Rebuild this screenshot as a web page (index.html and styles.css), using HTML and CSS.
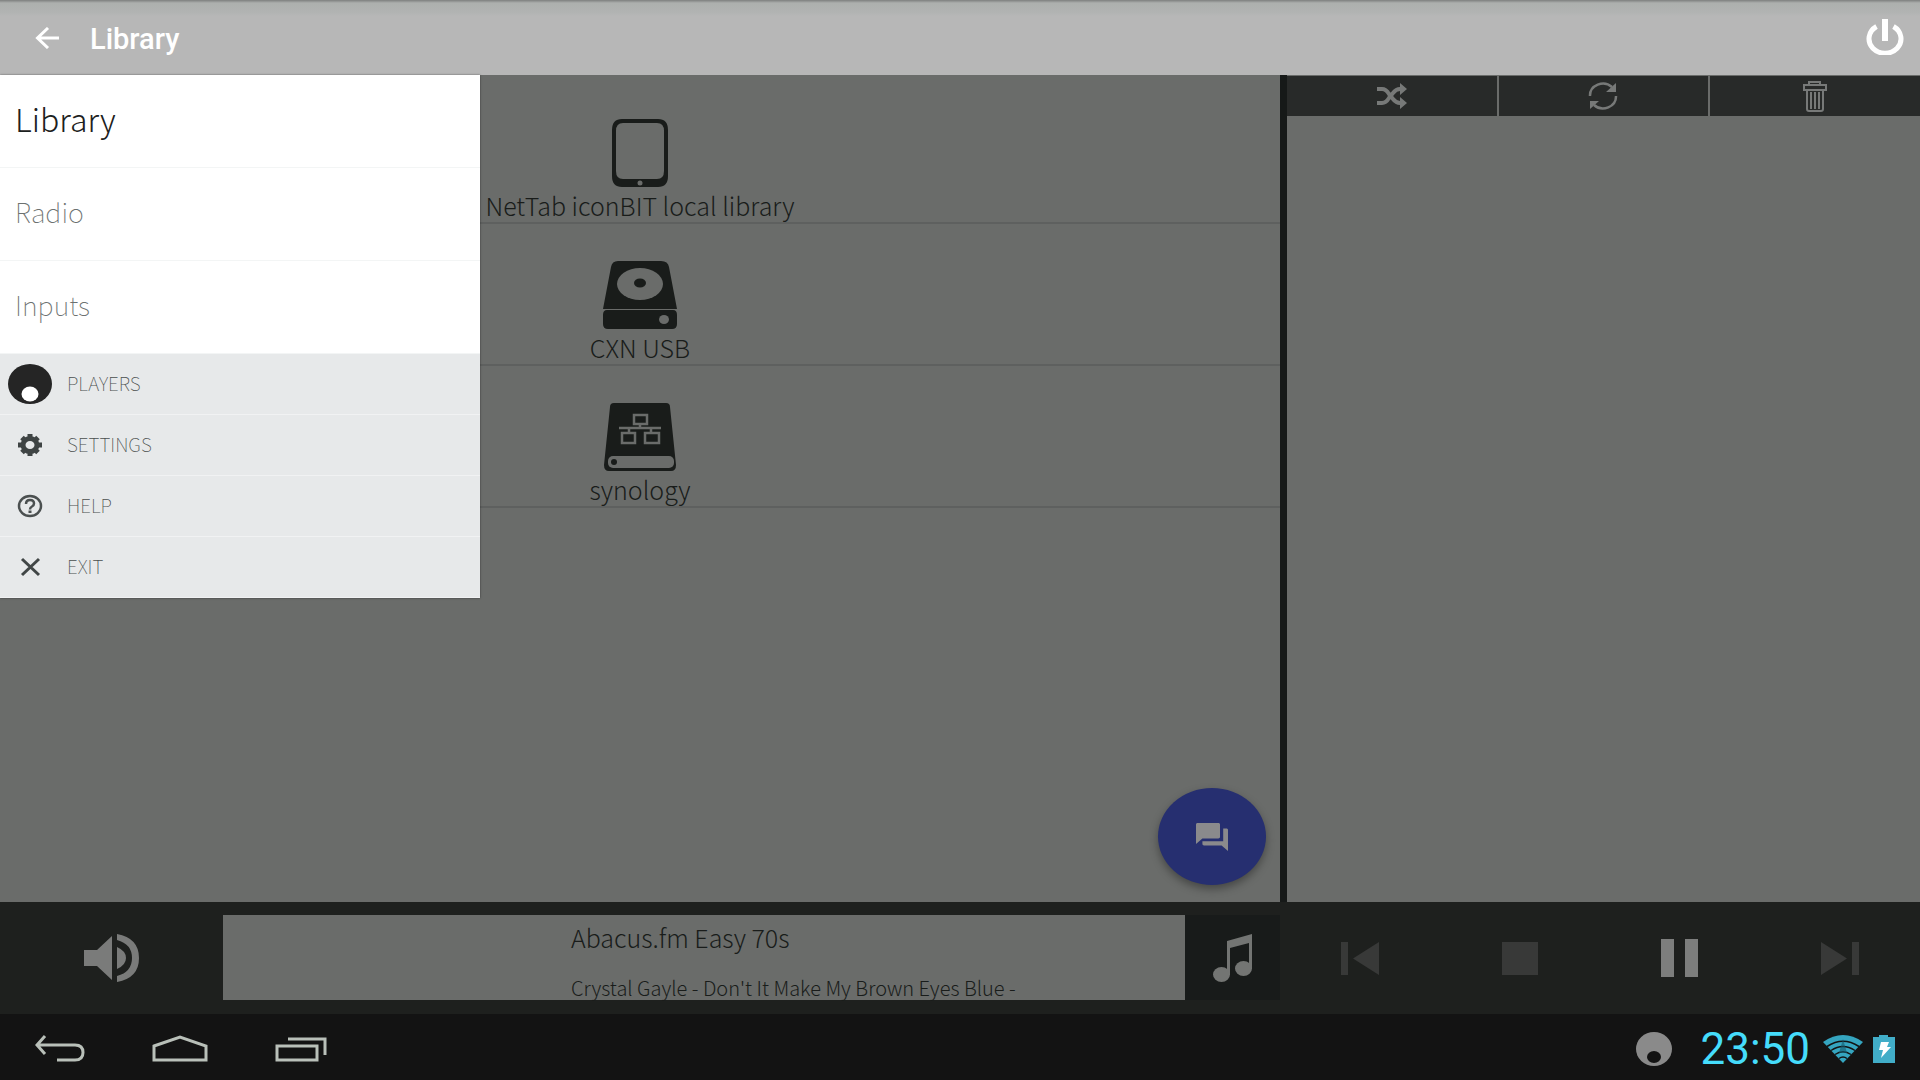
FILE: index.html
```html
<!DOCTYPE html>
<html lang="en">
<head>
<meta charset="utf-8">
<title>Library</title>
<link rel="stylesheet" href="styles.css">
</head>
<body>
<div class="app">
  <header class="topbar">
    <button class="icon-button back" aria-label="Back">
      <svg width="24" height="22" viewBox="0 0 24 22"><path d="M13 1 2.500 11 13 21M2.500 11H24" fill="none" stroke="currentColor" stroke-width="3"/></svg>
    </button>
    <h1 class="title">Library</h1>
    <button class="icon-button power" aria-label="Power">
      <svg width="38" height="36" viewBox="0 0 38 36"><path d="M10.500 7.500A16 14.500 0 1 0 27.500 7.500" fill="none" stroke="currentColor" stroke-width="5"/><path d="M16 0h6v22h-6z" fill="currentColor"/></svg>
    </button>
  </header>

  <main class="content">
    <section class="browser">
      <ul class="sources">
        <li><a class="source" href="#local">
          <svg width="76" height="70" viewBox="0 0 76 70"><path fill-rule="evenodd" fill="currentColor" d="M20 1h36q10 0 10 11v46q0 11-10 11H20q-10 0-10-11V12Q10 1 20 1zm1 4q-7 0-7 8v40q0 8 7 8h34q7 0 7-8V13q0-8-7-8z"/><circle cx="38" cy="65" r="2.500" fill="#6a6c6a"/></svg>
          <span>NetTab iconBIT local library</span></a></li>
        <li><a class="source" href="#usb">
          <svg width="76" height="70" viewBox="0 0 76 70"><path fill="currentColor" d="M16 1h43q7 0 8 6l8 42H1L9 7q1-6 7-6zM5 50h66q4 0 4 5v9q0 5-5 5H6q-5 0-5-5v-9q0-5 4-5z"/><ellipse cx="38" cy="24" rx="23" ry="16" fill="#6a6c6a"/><ellipse cx="38" cy="23" rx="6" ry="4.500" fill="currentColor"/><ellipse cx="62" cy="59.500" rx="5" ry="4.500" fill="#6a6c6a"/></svg>
          <span>CXN USB</span></a></li>
        <li><a class="source" href="#synology">
          <svg width="76" height="70" viewBox="0 0 76 70"><path fill="currentColor" d="M12 1h52q4 0 4 4l6 58q0 6-5 6H7q-5 0-5-6L8 5q0-4 4-4z"/><rect x="6" y="54" width="66" height="12" rx="5" fill="#6a6c6a"/><circle cx="12" cy="60" r="3" fill="currentColor"/><path fill="none" stroke="#6a6c6a" stroke-width="2.500" d="M32 13h13v9H32zM17 26h42M38 22v4M27 26v4M49 26v4M20 31h13v10H20zM43 31h14v10H43z"/></svg>
          <span>synology</span></a></li>
      </ul>
      <button class="fab" aria-label="Messages">
        <svg width="32" height="28" viewBox="2 2 20 20" preserveAspectRatio="none"><path fill="currentColor" d="M21 6h-2v9H6v2c0 .550.450 1 1 1h11l4 4V7c0-.550-.450-1-1-1zm-4 6V3c0-.550-.450-1-1-1H3c-.550 0-1 .450-1 1v14l4-4h10c.550 0 1-.450 1-1z"/></svg>
      </button>
    </section>

    <section class="queue">
      <div class="queue-tools">
        <button aria-label="Shuffle"><svg width="30" height="26" viewBox="0 0 30 26"><path d="M0 6h5q4 0 7 5l4 5q3 4 7 4h1M0 20h5q4 0 7-5l4-5q3-4 7-4h1" fill="none" stroke="currentColor" stroke-width="4"/><path fill="currentColor" d="M23 0l7 6-7 6zM23 14l7 6-7 6z"/></svg></button>
        <button aria-label="Repeat"><svg width="30" height="28" viewBox="0 0 30 28"><path d="M2 14A13 12 0 0 1 24 5M28 14A13 12 0 0 1 6 23" fill="none" stroke="currentColor" stroke-width="2.500"/><path fill="currentColor" d="M28 1v9h-10zM2 27v-8h9z"/></svg></button>
        <button aria-label="Clear queue"><svg width="26" height="32" viewBox="0 0 26 32"><path d="M7 5V2h11v3M2 5h22v5H2zM5 11v18q0 2 2 2h12q2 0 2-2V11M9 12v17M13 12v17M17 12v17" fill="none" stroke="currentColor" stroke-width="2"/></svg></button>
      </div>
    </section>

    <nav class="drawer">
      <a class="place current" href="#library">Library</a>
      <a class="place" href="#radio">Radio</a>
      <a class="place" href="#inputs">Inputs</a>
      <a class="action" href="#players">
        <svg width="44" height="40" viewBox="0 0 44 40"><ellipse cx="22" cy="20" rx="22" ry="20" fill="#252525"/><ellipse cx="22" cy="30" rx="8.500" ry="7.500" fill="#fff"/></svg><span>PLAYERS</span></a>
      <a class="action" href="#settings">
        <svg width="44" height="24" viewBox="0 0 44 24"><g fill="none" stroke="#3f4444"><ellipse cx="22" cy="12" rx="7" ry="6.500" stroke-width="5"/><path stroke-width="5" d="M22 1v4M22 19v4M10 12h4M30 12h4M14 4.500l3 3M27 16.500l3 3M14 19.500l3-3M27 7.500l3-3"/></g></svg><span>SETTINGS</span></a>
      <a class="action" href="#help">
        <svg width="44" height="24" viewBox="0 0 44 24"><g fill="none" stroke="#4b5050" stroke-width="2.500"><ellipse cx="22" cy="12" rx="11" ry="10"/><path d="M18 10q0-4 4-4t4 3.500q0 2-2 3t-2 3"/></g><path fill="#4b5050" d="M20.500 16.500h3v2.500h-3z"/></svg><span>HELP</span></a>
      <a class="action" href="#exit">
        <svg width="44" height="24" viewBox="0 0 44 24"><path d="M14 4l17 16M31 4L14 20" fill="none" stroke="#414646" stroke-width="3"/></svg><span>EXIT</span></a>
    </nav>
  </main>

  <footer class="player">
    <div class="now">
      <button class="volume" aria-label="Volume"><svg width="56" height="48" viewBox="0 0 56 48"><path fill="currentColor" d="M0 16h13L28 2v44L13 32H0zM33 13q9 4 9 11t-9 11zM33 0q22 4 22 24T33 48v-6q15-4 15-18T33 6z"/></svg></button>
      <div class="track">
        <p class="station">Abacus.fm Easy 70s</p>
        <p class="song">Crystal Gayle - Don't It Make My Brown Eyes Blue -</p>
      </div>
      <button class="cover" aria-label="Cover"><svg width="40" height="48" viewBox="0 0 40 48"><path fill="currentColor" d="M14 7L39 0v35h-3V9L17 14v27h-3z"/><ellipse cx="8.500" cy="40.500" rx="8.500" ry="7.500" fill="currentColor"/><ellipse cx="30.500" cy="34.500" rx="8.500" ry="7.500" fill="currentColor"/></svg></button>
    </div>
    <div class="controls">
      <button disabled aria-label="Previous"><svg width="38" height="33" viewBox="0 0 38 33"><path fill="currentColor" d="M0 0h7v33H0zM38 0v33L12 16.500z"/></svg></button>
      <button disabled aria-label="Stop"><svg width="36" height="33" viewBox="0 0 36 33"><path fill="currentColor" d="M0 0h36v33H0z"/></svg></button>
      <button aria-label="Pause"><svg width="38" height="38" viewBox="0 0 38 38"><path fill="currentColor" d="M0 0h13v38H0zM24 0h13v38H24z"/></svg></button>
      <button disabled aria-label="Next"><svg width="38" height="33" viewBox="0 0 38 33"><path fill="currentColor" d="M31 0h7v33h-7zM0 0v33l26-16.500z"/></svg></button>
    </div>
  </footer>

  <div class="system">
    <div class="system-keys">
      <button aria-label="System back"><svg width="50" height="28" viewBox="0 0 50 28"><path d="M10 1L2 10l8 9M2 10h38q8 0 8 7.500t-8 7.500H22" fill="none" stroke="currentColor" stroke-width="3"/></svg></button>
      <button aria-label="Home"><svg width="56" height="28" viewBox="0 0 56 28"><path d="M2 11L28 2l26 9v14H2z" fill="none" stroke="currentColor" stroke-width="3"/></svg></button>
      <button aria-label="Recent apps"><svg width="54" height="28" viewBox="0 0 54 28"><path d="M2 11h40v14H2zM13 4h37v16" fill="none" stroke="currentColor" stroke-width="3"/></svg></button>
    </div>
    <div class="status">
      <svg width="36" height="34" viewBox="0 0 36 34"><ellipse cx="18" cy="17" rx="18" ry="17" fill="#8a8a8a"/><ellipse cx="18" cy="25" rx="7" ry="6" fill="#131313"/></svg>
      <time class="clock">23:50</time>
      <svg width="40" height="28" viewBox="0 0 40 28"><path fill="#35a5c0" d="M0 7Q20-7 40 7L20 28z"/><path d="M4 11.500Q20 1 36 11.500M8 15.500Q20 7.500 32 15.500M12 19.500Q20 14 28 19.500M16 23.500Q20 20.500 24 23.500" fill="none" stroke="#131313" stroke-width="1.500"/><path fill="#14586a" d="M20 4l4 14h-8z" opacity=".6"/></svg>
      <svg width="22" height="28" viewBox="0 0 22 28"><path fill="#41adc8" d="M6 0h9v2h7v26H0V2h6z"/><path fill="#fff" d="M8 7h8l-2 5h4L8 23l2-8H6z"/></svg>
    </div>
  </div>
</div>
</body>
</html>
```
FILE: styles.css
```css
* { box-sizing: border-box; }

body {
  margin: 0;
  background: #131313;
  color: #191c1a;
  font-family: "Noto Sans CJK SC", "Noto Sans", sans-serif;
}

button {
  margin: 0;
  padding: 0;
  border: 0;
  background: none;
  color: inherit;
  font: inherit;
  display: flex;
  align-items: center;
  justify-content: center;
}

a { color: inherit; text-decoration: none; }
svg { display: block; flex: none; }

.app {
  min-height: 100vh;
  display: flex;
  flex-direction: column;
}

.topbar {
  height: 75px;
  flex: none;
  display: flex;
  align-items: center;
  padding: 0 16px 0 35px;
  background: linear-gradient(#7d7f7e 0, #adb0ae 3px, #b1b3b2 12px, #b7b7b7 16px);
  color: #fff;
}

.title {
  flex: 1;
  margin: 0 0 0 31px;
  padding-top: 2px;
  font: 500 29px/34px Roboto, sans-serif;
}

.power { padding-bottom: 2px; }

.content {
  position: relative;
  flex: 1;
  display: grid;
  grid-template-columns: 2fr 1fr;
  background: #6a6c6a;
}

.browser { position: relative; }

.sources { margin: 0; padding: 7px 0 0; list-style: none; }

.source {
  height: 142px;
  display: flex;
  flex-direction: column;
  align-items: center;
  justify-content: flex-end;
  border-bottom: 2px solid #5e605f;
  font-size: 25px;
  font-weight: 300;
  line-height: 34px;
}

.fab {
  position: absolute;
  right: 14px;
  bottom: 17px;
  width: 108px;
  height: 97px;
  border-radius: 50%;
  background: #262f70;
  color: #8a8a8c;
  box-shadow: 0 4px 8px rgba(0, 0, 0, .35);
}

.queue { border-left: 7px solid #161918; }

.queue-tools {
  display: grid;
  grid-template-columns: repeat(3, 1fr);
  gap: 2px;
  padding-top: 1px;
}

.queue-tools button {
  height: 40px;
  background: #282a29;
  color: #777978;
}

.drawer {
  position: absolute;
  top: 0;
  left: 0;
  width: 25%;
  background: #fff;
  box-shadow: 0 0 2px rgba(0, 0, 0, .5);
}

.place {
  height: 93px;
  display: flex;
  align-items: center;
  padding: 0 0 6px 15px;
  border-bottom: 1px solid #f3f5f5;
  color: #6c7170;
  font-size: 27px;
  font-weight: 100;
}

.place.current {
  color: #1c2120;
  font-size: 32px;
  font-weight: 300;
}

.action {
  height: 61px;
  display: flex;
  align-items: center;
  gap: 15px;
  padding-left: 8px;
  border-bottom: 1px solid #f1f2f3;
  background: #e7e9ea;
  color: #4a4f4e;
  font-size: 19px;
  font-weight: 100;
}

.action span { padding-bottom: 3px; }

.player {
  height: 112px;
  flex: none;
  display: grid;
  grid-template-columns: 2fr 1fr;
  background: #1e201e;
}

.now {
  display: flex;
  padding: 13px 0 14px;
}

.volume { width: 223px; color: #7a7b7a; }

.track {
  flex: 1;
  display: flex;
  flex-direction: column;
  justify-content: space-between;
  padding-left: 348px;
  background: #6a6c6a;
  font-weight: 300;
}

.station, .song { margin: 0; white-space: nowrap; }
.station { font-size: 25px; line-height: 44px; }
.song { font-size: 20px; line-height: 24px; }

.cover { width: 95px; background: #181b1a; color: #737573; }

.controls {
  display: grid;
  grid-template-columns: repeat(4, 1fr);
  color: #7d7e7d;
}

.controls button:disabled { color: #383938; }

.system {
  height: 66px;
  flex: none;
  display: flex;
  align-items: center;
  justify-content: space-between;
  padding: 4px 25px 0 35px;
  background: #131313;
  color: #b9c0b9;
}

.system-keys { display: flex; gap: 67px; }

.status { display: flex; align-items: center; gap: 10px; }

.clock {
  margin: 0 3px 0 18px;
  color: #45dcfb;
  font: 400 44px/50px Roboto, sans-serif;
}
```
